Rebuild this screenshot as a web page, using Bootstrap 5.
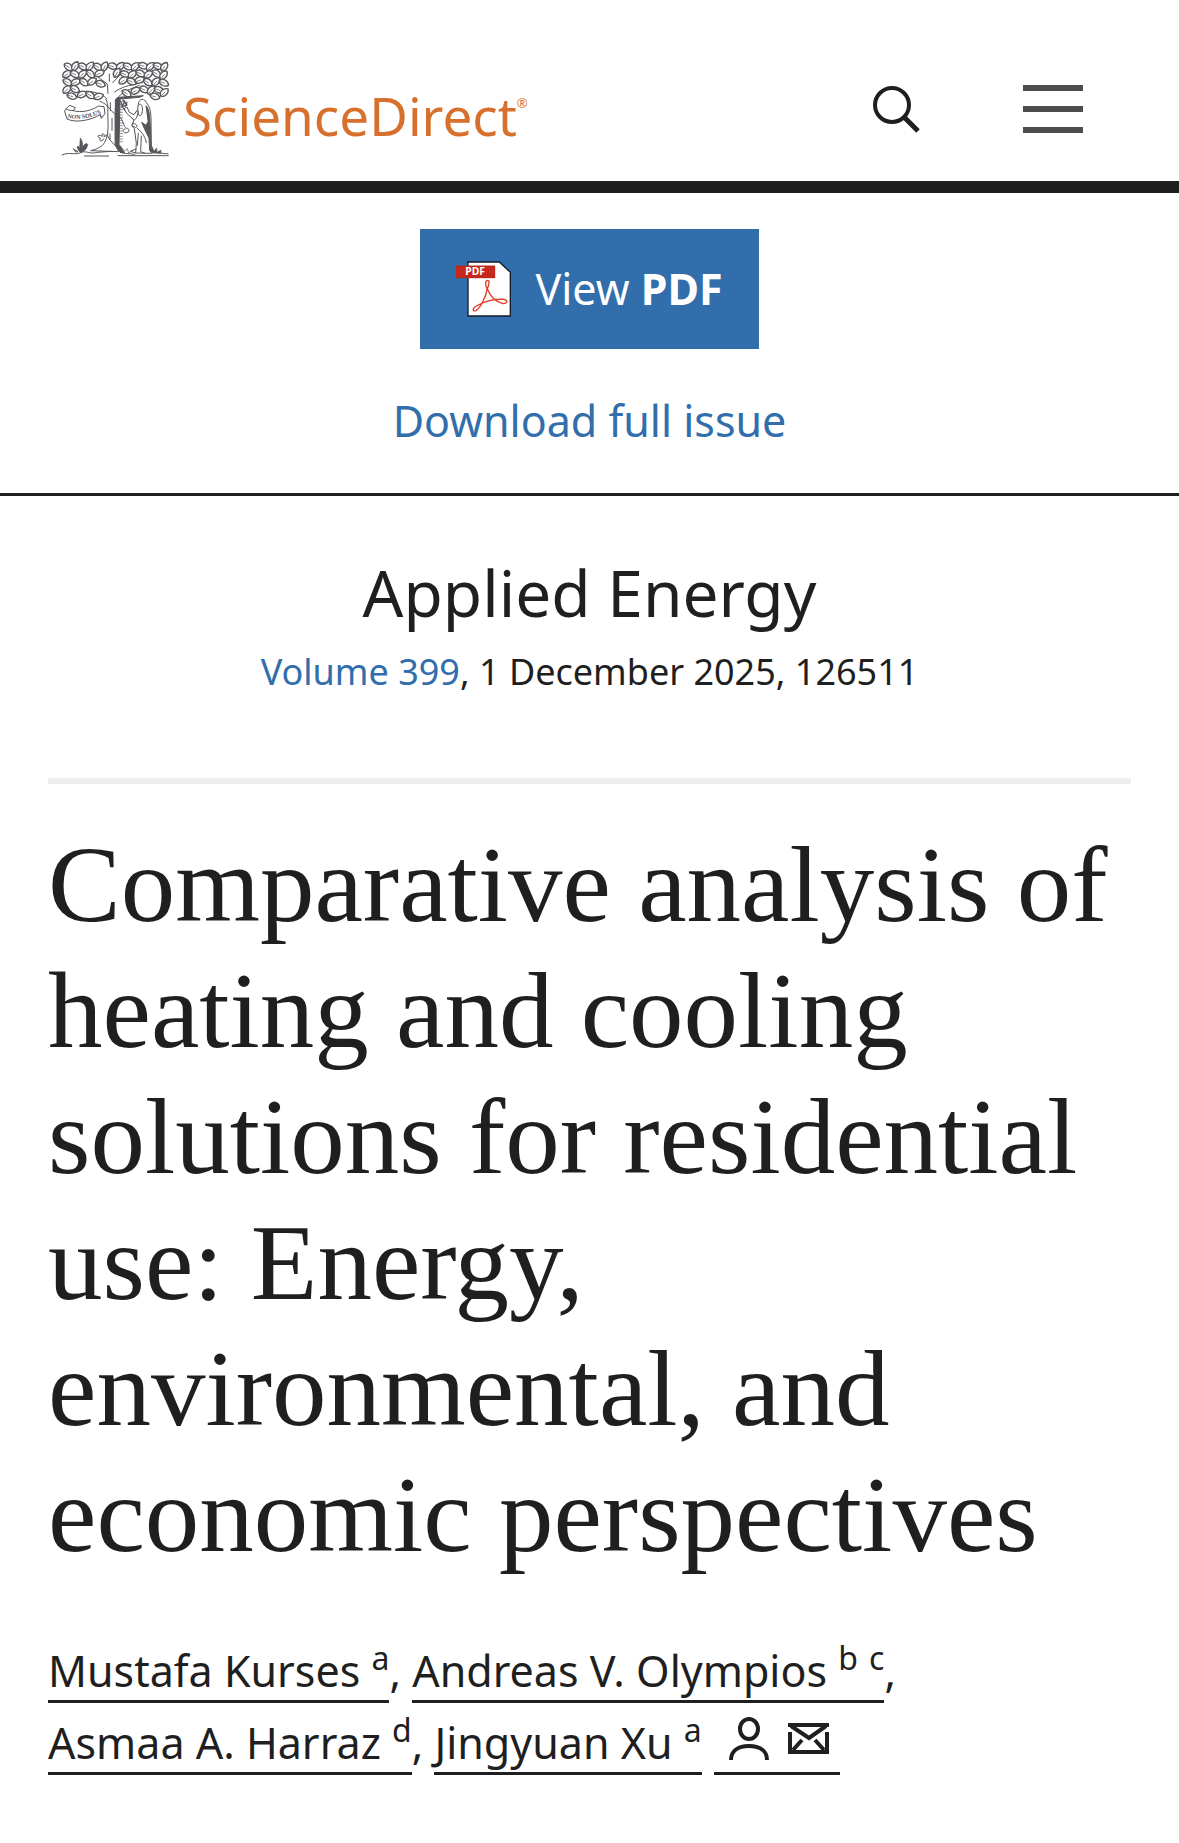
<!DOCTYPE html>
<html lang="en">
<head>
<meta charset="utf-8">
<meta name="viewport" content="width=device-width, initial-scale=1">
<title>Comparative analysis of heating and cooling solutions - ScienceDirect</title>
<link href="https://cdn.jsdelivr.net/npm/bootstrap@5.3.0/dist/css/bootstrap.min.css" rel="stylesheet">
<style>
  body { font-family: "Noto Sans", "Open Sans", sans-serif; color: #1f1f1f; background: #fff; font-size: 43px; line-height: 72px; }
  a { text-decoration: none; color: #316eab; }
  .site-header { padding: 60px 96px 23px 60px; border-bottom: 12px solid #1f1f1f; }
  .brand { gap: 13px; color: #d7702c; font-size: 53px; line-height: 76px; }
  .wordmark { padding-top: 14px; }
  .brand sup { font-size: 13px; top: -28px; }
  .tree { width: 110px; height: 98px; }
  .icon-btn { border: 0; padding: 0; background: none; line-height: 0; }
  .header-tools { gap: 102px; }
  .actions { padding: 36px 48px; gap: 36px; border-bottom: 3px solid #1f1f1f; }
  .pdf-btn { background: #316eab; color: #fff; border: 0; border-radius: 0; height: 120px; padding: 0 36px; gap: 24px; font-size: 43px; }
  .paper { padding: 60px 48px; }
  .journal { font-size: 64px; line-height: 74px; margin: 0; font-weight: 400; }
  .issue { font-size: 36px; line-height: 60px; padding-top: 12px; }
  .rule { height: 6px; background: #eee; margin-top: 76px; }
  .headline { font-family: "Liberation Serif", serif; font-size: 109px; line-height: 126px; font-weight: 400; margin: 38px 0 57px; }
  .author { color: #1f1f1f; border: 0; border-bottom: 3px solid #1f1f1f; border-radius: 0; background: none; padding: 0; line-height: 48px; }
  .author sup { font-size: 32px; top: -17px; line-height: 0; vertical-align: baseline; }
  .author-icons { padding: 0 11px 0 15px; margin-left: 12px; }
  .author-icons svg { vertical-align: -1px; }
</style>
</head>
<body>
<header class="site-header d-flex align-items-center justify-content-between">
  <a class="brand d-flex align-items-center" href="#">
    <svg class="tree" viewBox="30 30 330 294" fill="none" stroke="#55555a" stroke-width="3" stroke-linecap="round" stroke-linejoin="round" role="img" aria-label="Elsevier tree">
      <defs>
        <g id="lf"><path fill="#fff" stroke-width="4" d="M-15 0C-9-14 8-13 16 0C8 12-9 10-15 0Z"/><path stroke-width="2" d="M-12 0H3"/></g>
      </defs>
      <path fill="#fff" stroke="none" d="M172 153C168 132 140 124 105 120L107 115C138 116 158 120 174 130L172 102 141 82 145 78 178 96 180 68 187 68 188 98 208 75 213 78 194 108 195 126C213 111 238 105 268 98L270 104C236 117 212 126 201 149Z"/>
      <path d="M172 150C165 134 140 127 110 123M174 130L172 102 145 82M178 94V72M188 98L208 77M194 126C213 111 238 106 266 100M201 146C213 128 240 117 268 106"/>
      <use href="#lf" transform="translate(55 51) rotate(35)"/><use href="#lf" transform="translate(76 49) rotate(-60)"/>
      <use href="#lf" transform="translate(98 50) rotate(24)"/><use href="#lf" transform="translate(120 49) rotate(-52)"/>
      <use href="#lf" transform="translate(143 51) rotate(30)"/><use href="#lf" transform="translate(164 50) rotate(-65)"/>
      <use href="#lf" transform="translate(187 49) rotate(12)"/><use href="#lf" transform="translate(211 50) rotate(-50)"/>
      <use href="#lf" transform="translate(233 50) rotate(25)"/><use href="#lf" transform="translate(256 50) rotate(-45)"/>
      <use href="#lf" transform="translate(279 48) rotate(15)"/><use href="#lf" transform="translate(301 50) rotate(-48)"/>
      <use href="#lf" transform="translate(323 49) rotate(20)"/><use href="#lf" transform="translate(343 51) rotate(-58)"/>
      <use href="#lf" transform="translate(51 73) rotate(-35)"/><use href="#lf" transform="translate(74 73) rotate(25)"/>
      <use href="#lf" transform="translate(98 73) rotate(-48)"/><use href="#lf" transform="translate(121 72) rotate(42)"/>
      <use href="#lf" transform="translate(148 71) rotate(-25)"/>
      <use href="#lf" transform="translate(201 69) rotate(-60)"/><use href="#lf" transform="translate(224 73) rotate(18)"/>
      <use href="#lf" transform="translate(247 74) rotate(-42)"/><use href="#lf" transform="translate(271 71) rotate(24)"/>
      <use href="#lf" transform="translate(295 74) rotate(-35)"/><use href="#lf" transform="translate(319 71) rotate(32)"/>
      <use href="#lf" transform="translate(341 76) rotate(-52)"/><use href="#lf" transform="translate(52 97) rotate(28)"/>
      <use href="#lf" transform="translate(77 97) rotate(-25)"/><use href="#lf" transform="translate(101 97) rotate(36)"/>
      <use href="#lf" transform="translate(126 95) rotate(-36)"/><use href="#lf" transform="translate(151 102) rotate(20)"/>
      <use href="#lf" transform="translate(220 92) rotate(-38)"/><use href="#lf" transform="translate(244 95) rotate(26)"/>
      <use href="#lf" transform="translate(269 91) rotate(-20)"/><use href="#lf" transform="translate(293 97) rotate(32)"/>
      <use href="#lf" transform="translate(318 96) rotate(-48)"/><use href="#lf" transform="translate(341 99) rotate(23)"/>
      <use href="#lf" transform="translate(51 119) rotate(-42)"/><use href="#lf" transform="translate(74 118) rotate(26)"/>
      <use href="#lf" transform="translate(96 134) rotate(-25)"/><use href="#lf" transform="translate(120 136) rotate(30)"/>
      <use href="#lf" transform="translate(145 140) rotate(-20)"/><use href="#lf" transform="translate(229 130) rotate(30)"/>
      <use href="#lf" transform="translate(256 123) rotate(-30)"/><use href="#lf" transform="translate(282 119) rotate(22)"/>
      <use href="#lf" transform="translate(304 121) rotate(-50)"/><use href="#lf" transform="translate(326 120) rotate(20)"/>
      <use href="#lf" transform="translate(343 128) rotate(-45)"/><use href="#lf" transform="translate(65 139) rotate(16)"/>
      <use href="#lf" transform="translate(314 140) rotate(15)"/>
      <!-- trunk and its shaded side -->
      <path fill="#fff" d="M168 148C177 163 172 190 174 215C176 240 172 262 164 277C157 290 142 297 122 302L206 305C195 288 196 263 196 235C196 205 193 170 202 143"/>
      <path fill="#55555a" d="M197 148L204 142 280 137 268 142 210 147 207 285 224 309 207 303 196 286Z"/>
      <path stroke-width="2" d="M210 155h8M210 163h7M210 171h8M210 179h7M210 187h8M210 195h7M210 203h8M210 211h7M210 219h8M210 227h7M210 235h8M210 243h7M210 251h8M210 259h7M210 267h8M210 275h7"/>
      <path d="M181 158v24M186 205v36M180 252v16M172 257C181 278 201 286 212 308"/>
      <!-- vine -->
      <path d="M150 154C174 160 184 190 205 199C222 208 219 231 230 235C242 235 238 252 224 248C216 244 219 235 226 237"/>
      <path d="M174 253L162 260C165 248 153 248 157 259C143 251 138 261 151 264C145 275 158 276 161 267"/>
      <!-- banner -->
      <path fill="#fff" d="M48 177L59 166 76 173 70 182C93 189 126 182 145 168L162 170 165 191 154 205 151 194C120 211 79 220 51 207L44 184Z"/>
      <path id="motto" stroke="none" d="M52 203C88 212 126 203 162 185"/>
      <path d="M70 182C60 182 54 180 48 177M151 194L154 202"/>
      <text font-family="Liberation Serif, serif" font-size="18" font-weight="700" fill="#4c4c50" stroke="none"><textPath href="#motto">NON SOLUS</textPath></text>
      <!-- old man -->
      <path fill="#fff" d="M265 162C267 144 285 144 289 158C299 169 302 180 303 206L304 310 257 309 259 280 253 236 245 227 252 210 230 190 222 176 231 171 238 187 252 194 262 180Z"/>
      <path fill="#55555a" d="M289 168C302 178 301 235 304 307L299 302 297 264 286 242 275 217 288 226 294 215Z"/>
      <path d="M267 164C276 155 281 180 274 194C267 204 263 190 264 180M253 211C261 204 265 193 264 184M247 221C258 218 267 230 257 233L247 227M262 235C280 250 287 265 289 278M265 250L262 286M274 258L272 302M257 309L241 304 258 297M285 310L272 305"/>
      <path stroke-width="4" d="M211 153C217 162 215 172 224 180M219 150L228 162M225 153L219 164M231 157L226 169M215 170L231 165"/>
      <!-- ground and grasses -->
      <path d="M36 315C58 304 76 318 95 306C113 303 119 313 143 307L184 304M103 318H176M207 304C225 316 243 307 255 315M204 317H355M306 309C324 303 336 313 354 311"/>
      <path fill="#55555a" stroke-width="2" d="M89 306C78 291 80 284 89 293L91 264C99 274 99 291 96 300C99 283 110 277 113 283C112 294 106 301 96 307ZM77 306L69 296 83 304ZM306 307L306 290 312 304 320 294 321 307 333 300 332 310Z"/>
      <path stroke-width="2" d="M216 310L211 287 224 304 232 296 236 309 246 302"/>
    </svg>
    <span class="wordmark">ScienceDirect<sup>®</sup></span>
  </a>
  <div class="header-tools d-flex align-items-center">
    <button class="icon-btn" type="button" aria-label="Search">
      <svg width="48" height="48" viewBox="0 0 48 48" fill="none" stroke="#1f1f1f" stroke-width="4"><circle cx="19" cy="20" r="17"/><path stroke-width="5" d="M31 32L45 46"/></svg>
    </button>
    <button class="icon-btn" type="button" aria-label="Menu">
      <svg width="60" height="48" viewBox="0 0 60 48" fill="#4c4c4c"><path d="M0 0h60v6H0zM0 21h60v6H0zM0 42h60v6H0z"/></svg>
    </button>
  </div>
</header>

<section class="actions d-flex flex-column align-items-center">
  <button class="pdf-btn btn d-flex align-items-center" type="button">
    <svg width="55" height="56" viewBox="0 0 165 168" aria-hidden="true">
      <path fill="#fff" stroke="#111c28" stroke-width="4" d="M36 3H130L163 34V165H36Z"/>
      <path fill="#c5281c" stroke="#8f2424" stroke-width="1" d="M0 14H117V51H0Z"/>
      <text x="28" y="43" fill="#fff" font-family="Noto Sans, sans-serif" font-size="31" font-weight="700">PDF</text>
      <path fill="none" stroke="#e23b27" stroke-width="4" d="M95 58C86 58 88 74 93 85C90 110 71 142 60 149C49 153 48 142 61 135C83 121 118 113 144 115C158 118 153 129 141 128C118 122 102 104 94 83C99 72 102 58 95 58Z"/>
    </svg>
    <span>View <strong>PDF</strong></span>
  </button>
  <a href="#">Download full issue</a>
</section>

<main class="paper">
  <div class="text-center">
    <h2 class="journal">Applied Energy</h2>
    <div class="issue"><a href="#">Volume 399</a>, 1 December 2025, 126511</div>
  </div>
  <div class="rule"></div>
  <h1 class="headline">Comparative analysis of heating and cooling solutions for residential use: Energy, environmental, and economic perspectives</h1>
  <div class="authors">
    <a class="author" href="#">Mustafa Kurses <sup>a</sup></a>, <a class="author" href="#">Andreas V. Olympios <sup>b</sup> <sup>c</sup></a>, <br>
    <a class="author" href="#">Asmaa A. Harraz <sup>d</sup></a>, <a class="author" href="#">Jingyuan Xu <sup>a</sup></a><a class="author author-icons" href="#" aria-label="Author profile and email"><svg width="100" height="43" viewBox="0 0 100 43" fill="none" stroke="#1f1f1f" stroke-width="4"><ellipse cx="20" cy="12" rx="9" ry="10"/><path d="M2 43C2 34 9 29 20 29S38 34 38 43M61 15V35H98V15M59 8H100M62 9L80 21 97 9M64 33L73 23M95 33L86 23"/></svg></a>
  </div>
</main>
<script src="https://cdn.jsdelivr.net/npm/bootstrap@5.3.0/dist/js/bootstrap.bundle.min.js"></script>
</body>
</html>
